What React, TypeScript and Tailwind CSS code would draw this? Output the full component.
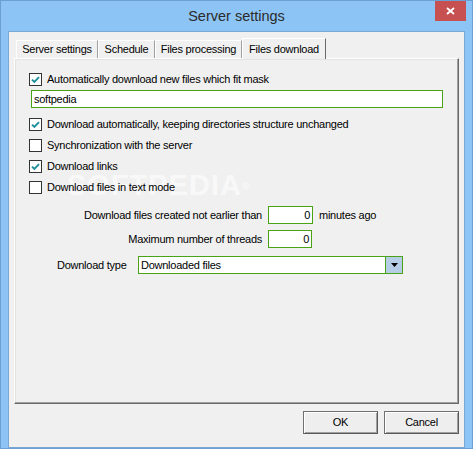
import React from 'react'

const Check = () => (
  <svg width="9" height="8" viewBox="0 0 9 8">
    <path d="M1 3.6 3.4 6 8 1.2" stroke="#1d8f9b" strokeWidth="1.9" fill="none" />
  </svg>
)

const Checkbox = ({ checked, label }: { checked?: boolean; label: string }) => (
  <div className="relative flex h-[13px] items-center gap-[5px]">
    <span className="flex h-[13px] w-[13px] items-center justify-center border border-[#333333] bg-white">
      {checked && <Check />}
    </span>
    <span className="leading-none">{label}</span>
  </div>
)

const Tab = ({ label, w, active }: { label: string; w: string; active?: boolean }) =>
  active ? (
    <div
      className={`relative z-10 -mb-px flex h-[21px] items-start justify-center border-l border-t border-r border-l-white border-t-white border-r-[#696969] bg-[#f0f0f0] pt-[2px] ${w}`}
    >
      {label}
    </div>
  ) : (
    <div
      className={`flex h-[18px] items-center justify-center border-l border-t border-r border-l-white border-t-white border-r-[#a0a0a0] bg-[#f0f0f0] ${w}`}
    >
      {label}
    </div>
  )

const Field = ({ value, w, right }: { value: string; w: string; right?: boolean }) => (
  <div
    className={`flex h-[18px] items-center border border-[#4aa316] bg-white px-[2px] ${w} ${right ? 'justify-end' : ''}`}
  >
    {value}
  </div>
)

const Button = ({ label }: { label: string }) => (
  <div className="flex h-[23px] w-[75px] items-center justify-center border border-[#707070] border-b-[#5a5a5a] border-r-[#5a5a5a] bg-[#eeeeee] shadow-[inset_1px_1px_0_#ffffff,inset_-1px_-1px_0_#a0a0a0]">
    {label}
  </div>
)

export default function App() {
  return (
    <div className="flex h-[449px] w-[473px] flex-col border border-[#6c9fd2] bg-[#8cc4f6] font-['Liberation_Sans',Arial,sans-serif] text-[11px] tracking-[-0.25px] text-black">
      <div className="relative flex h-[30px] items-center justify-center">
        <span className="pt-[1px] text-[14.5px] tracking-normal text-[#2b2b2b]">Server settings</span>
        <div className="absolute right-[6px] top-0 flex h-[20px] w-[31px] items-center justify-center bg-[#c75050]">
          <svg width="9" height="8" viewBox="0 0 9 8">
            <path d="M1 1 8 7M8 1 1 7" stroke="#fff" strokeWidth="1.8" />
          </svg>
        </div>
      </div>

      <div className="mx-[7px] flex flex-1 flex-col border border-[#7aa7d4] bg-[#f0f0f0] px-[5px] pt-[6px]">
        <div className="flex items-end pl-[2px]">
          <Tab label="Server settings" w="w-[82px]" />
          <Tab label="Schedule" w="w-[57px]" />
          <Tab label="Files processing" w="w-[87px]" />
          <Tab label="Files download" w="w-[84px]" active />
        </div>

        <div className="relative flex h-[346px] flex-col border border-l-white border-t-white border-r-[#696969] border-b-[#696969] pl-[14px] pt-[14px] shadow-[inset_-1px_-1px_0_#a0a0a0,inset_1px_1px_0_#e3e3e3]">
          <span className="pointer-events-none absolute left-[52px] top-[105px] text-[29px] font-bold tracking-[1px] text-white/60">
            SOFTPEDIA<sup className="text-[10px]">®</sup>
          </span>

          <Checkbox checked label="Automatically download new files which fit mask" />
          <div className="relative ml-[2px] mt-[4px]">
            <Field value="softpedia" w="w-[412px]" />
          </div>
          <div className="mt-[10px] flex flex-col gap-[8px]">
            <Checkbox checked label="Download automatically, keeping directories structure unchanged" />
            <Checkbox label="Synchronization with the server" />
            <Checkbox checked label="Download links" />
            <Checkbox label="Download files in text mode" />
          </div>

          <div className="relative mt-[12px] flex items-center">
            <span className="w-[233px] text-right">Download files created not earlier than</span>
            <div className="ml-[6px]">
              <Field value="0" w="w-[45px]" right />
            </div>
            <span className="ml-[6px]">minutes ago</span>
          </div>
          <div className="relative mt-[6px] flex items-center">
            <span className="w-[233px] text-right">Maximum number of threads</span>
            <div className="ml-[6px]">
              <Field value="0" w="w-[44px]" right />
            </div>
          </div>
          <div className="relative mt-[8px] flex items-center pl-[28px]">
            <span className="w-[81px]">Download type</span>
            <div className="flex h-[18px] w-[265px] border border-[#4aa316] bg-white">
              <span className="flex flex-1 items-center px-[2px]">Downloaded files</span>
              <span className="flex w-[17px] items-center justify-center border-l border-[#4aa316] bg-[#b5cde5]">
                <svg width="7" height="4" viewBox="0 0 7 4">
                  <path d="M0 0h7L3.5 4z" fill="#000" />
                </svg>
              </span>
            </div>
          </div>
        </div>

        <div className="mt-[7px] flex justify-end gap-[6px]">
          <Button label="OK" />
          <Button label="Cancel" />
        </div>
      </div>
    </div>
  )
}
